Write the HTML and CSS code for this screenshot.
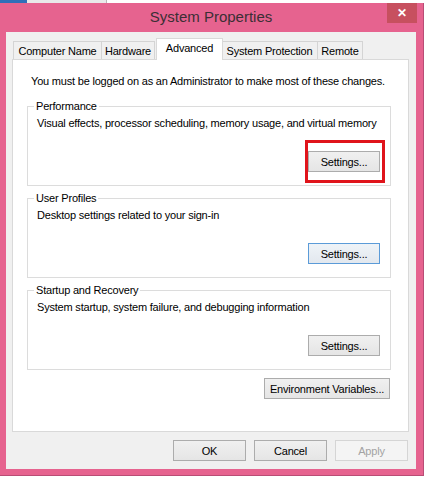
FILE: index.html
```html
<!DOCTYPE html>
<html lang="en">
<head>
  <meta charset="UTF-8" />
  <meta name="viewport" content="width=device-width, initial-scale=1.0"/>
  <title>System Properties</title>
  <link rel="stylesheet" href="styles.css">
</head>
<body>

<div class="strip">
  <span class="strip-blue"></span>
  <span class="strip-gray"></span>
</div>

<div class="window">
  <div class="titlebar">
    <span class="title">System Properties</span>
    <span class="close">&#x2715;</span>
  </div>

  <div class="client">
    <div class="tabs">
      <span class="tab tab-name">Computer Name</span>
      <span class="tab tab-hw">Hardware</span>
      <span class="tab tab-adv active">Advanced</span>
      <span class="tab tab-sp">System Protection</span>
      <span class="tab tab-rem">Remote</span>
    </div>

    <div class="panel">
      <p class="note">You must be logged on as an Administrator to make most of these changes.</p>

      <fieldset class="group">
        <legend>Performance</legend>
        <p class="desc">Visual effects, processor scheduling, memory usage, and virtual memory</p>
        <div class="group-actions">
          <span class="marked">
            <button class="btn">Settings...</button>
            <span class="mark"></span>
          </span>
        </div>
      </fieldset>

      <fieldset class="group">
        <legend>User Profiles</legend>
        <p class="desc">Desktop settings related to your sign-in</p>
        <div class="group-actions">
          <button class="btn focused">Settings...</button>
        </div>
      </fieldset>

      <fieldset class="group">
        <legend>Startup and Recovery</legend>
        <p class="desc">System startup, system failure, and debugging information</p>
        <div class="group-actions">
          <button class="btn">Settings...</button>
        </div>
      </fieldset>

      <div class="env-row">
        <button class="btn btn-env">Environment Variables...</button>
      </div>
    </div>

    <div class="dialog-buttons">
      <button class="btn btn-dlg">OK</button>
      <button class="btn btn-dlg">Cancel</button>
      <button class="btn btn-dlg" disabled>Apply</button>
    </div>
  </div>
</div>

</body>
</html>
```

FILE: styles.css
```css
* {
  box-sizing: border-box;
}

body {
  margin: 0;
  background: #fff;
  font-family: 'Liberation Sans', Arial, sans-serif;
  font-size: 11px;
  letter-spacing: -0.2px;
  color: #000;
  overflow: hidden;
}

/* sliver of the desktop above the window */
.strip {
  display: flex;
  height: 3px;
}

.strip-blue {
  width: 27px;
  background: #2f6fb9;
}

.strip-gray {
  width: 80px;
  background: #e9e9e9;
  border-right: 1px solid #b8b8b8;
}

.window {
  width: 424px;
  height: 473px;
  background: #e6638f;
  border-right: 1px solid #b94d75;
  border-bottom: 1px solid #b94d75;
  display: flex;
  flex-direction: column;
  padding: 0 7px 0 6px;
}

.titlebar {
  height: 29px;
  display: flex;
  align-items: center;
  justify-content: center;
  position: relative;
}

.title {
  font-size: 15px;
  letter-spacing: 0;
  color: #3b2f35;
  margin-top: -2px;
}

.close {
  position: absolute;
  right: -1px;
  top: 0;
  width: 30px;
  height: 20px;
  background: #c7505f;
  color: #fff;
  font-size: 12px;
  font-weight: bold;
  display: flex;
  align-items: center;
  justify-content: center;
}

.client {
  width: 410px;
  height: 437px;
  background: #f0f0f0;
  padding: 6px 0 0 6px;
}

.tabs {
  display: flex;
  align-items: flex-end;
  height: 21px;
  padding-left: 2px;
}

.tab {
  height: 18px;
  border: 1px solid #d4d4d4;
  border-bottom: none;
  background: #f0f0f0;
  display: flex;
  align-items: center;
  justify-content: center;
  margin-left: -1px;
  white-space: nowrap;
}

.tab-name { width: 89px; }
.tab-hw { width: 54px; }
.tab-sp { width: 97px; }
.tab-rem { width: 46px; }

.tab.active {
  width: 67px;
  height: 22px;
  background: #fff;
  border-color: #d9d9d9;
  margin: 0 -1px -1px 1px;
  padding-bottom: 3px;
  position: relative;
  z-index: 1;
}

.panel {
  width: 397px;
  height: 373px;
  background: #fff;
  border: 1px solid #d9d9d9;
  padding: 14px 17px 0 14px;
}

.note {
  margin: 0 0 10px 4px;
  line-height: 15px;
  white-space: nowrap;
}

.group {
  min-width: 0;
  width: 364px;
  height: 87px;
  margin: 0 0 5px 0;
  border: 1px solid #dcdcdc;
  padding: 3px 10px 0 9px;
}

.group legend {
  padding: 0 2px;
  margin-left: -3px;
  line-height: 14px;
}

.desc {
  margin: 0;
  line-height: 15px;
  white-space: nowrap;
}

.group-actions {
  display: flex;
  justify-content: flex-end;
  margin-top: 20px;
}

.btn {
  font-family: 'Liberation Sans', Arial, sans-serif;
  font-size: 11px;
  letter-spacing: -0.2px;
  color: #000;
  height: 21px;
  width: 72px;
  padding: 0;
  white-space: nowrap;
  border: 1px solid #acacac;
  background: linear-gradient(#f0f0f0, #e5e5e5);
}

.btn.focused {
  border-color: #5b9bd8;
  background: linear-gradient(#eef3f8, #e3e8ee);
}

.btn:disabled {
  color: #a3a3a3;
  border-color: #d5d5d5;
  background: #f4f4f4;
}

/* red annotation around the first settings button */
.marked {
  position: relative;
  display: inline-flex;
}

.mark {
  position: absolute;
  left: -3px;
  right: -5px;
  top: -11px;
  bottom: -11px;
  border: 3px solid #e0141b;
}

.env-row {
  display: flex;
  justify-content: flex-end;
  margin-top: 8px;
  padding-right: 1px;
}

.btn-env {
  width: 126px;
}

.dialog-buttons {
  display: flex;
  justify-content: flex-end;
  gap: 8px;
  margin-top: 8px;
  padding-right: 8px;
}

.btn-dlg {
  width: 73px;
}
```
